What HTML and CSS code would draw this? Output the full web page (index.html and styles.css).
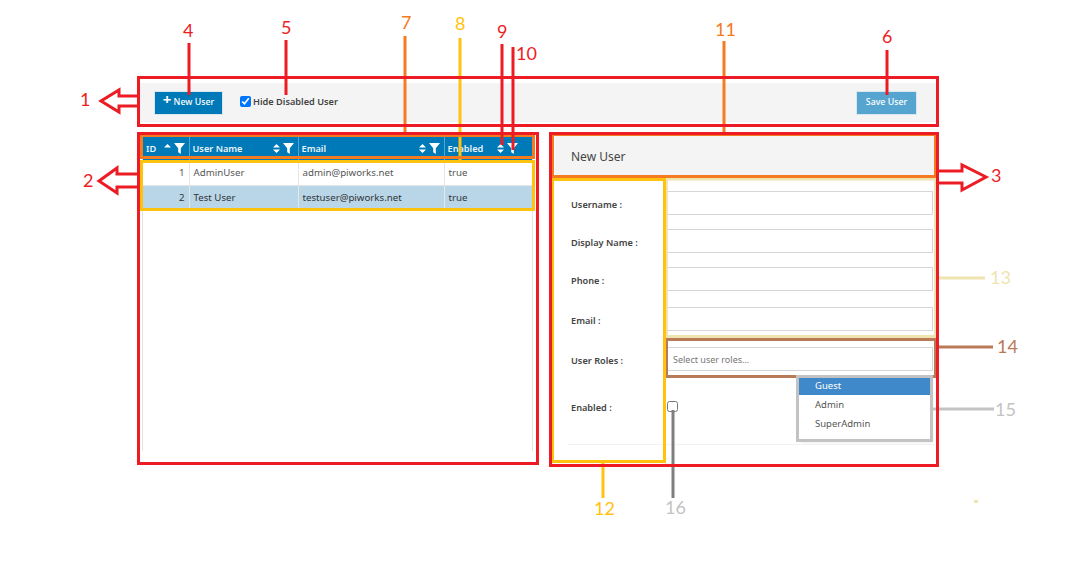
FILE: index.html
```html
<!DOCTYPE html>
<html lang="en">
<head>
    <meta charset="UTF-8">
    <meta name="viewport" content="width=device-width, initial-scale=1.0">
    <title>User Management</title>
    <link rel="stylesheet" href="styles.css">
</head>
<body>
    <svg width="0" height="0" class="defs">
        <symbol id="funnel" viewBox="0 0 11 11"><path d="M0 0h11L6.8 5.2V11L4.2 9.2V5.2z"/></symbol>
        <symbol id="sort" viewBox="0 0 7 9"><path d="M3.5 0L7 3.6H0zM3.5 9L0 5.4h7z"/></symbol>
        <symbol id="sort-up" viewBox="0 0 7 9"><path d="M3.5 0L7 3.6H0z"/></symbol>
    </svg>

    <div class="app">
        <div class="toolbar">
            <button class="btn btn-new"><span class="plus">+</span> New User</button>
            <label class="hide-disabled"><input type="checkbox" checked> Hide Disabled User</label>
            <button class="btn btn-save">Save User</button>
        </div>

        <div class="panels">
            <div class="grid-panel">
                <table class="user-grid">
                    <colgroup>
                        <col class="col-id"><col class="col-name"><col class="col-email"><col class="col-enabled">
                    </colgroup>
                    <thead>
                        <tr>
                            <th><div class="th-inner"><span>ID</span><span class="th-icons"><svg class="ic-sort"><use href="#sort-up"/></svg><svg class="ic-filter"><use href="#funnel"/></svg></span></div></th>
                            <th><div class="th-inner"><span>User Name</span><span class="th-icons"><svg class="ic-sort"><use href="#sort"/></svg><svg class="ic-filter"><use href="#funnel"/></svg></span></div></th>
                            <th><div class="th-inner"><span>Email</span><span class="th-icons"><svg class="ic-sort"><use href="#sort"/></svg><svg class="ic-filter"><use href="#funnel"/></svg></span></div></th>
                            <th class="th-last"><div class="th-inner"><span>Enabled</span><span class="th-icons"><svg class="ic-sort"><use href="#sort"/></svg><svg class="ic-filter"><use href="#funnel"/></svg></span></div></th>
                        </tr>
                    </thead>
                    <tbody>
                        <tr>
                            <td class="num">1</td><td>AdminUser</td><td>admin@piworks.net</td><td>true</td>
                        </tr>
                        <tr class="selected">
                            <td class="num">2</td><td>Test User</td><td>testuser@piworks.net</td><td>true</td>
                        </tr>
                    </tbody>
                </table>
            </div>

            <div class="form-panel">
                <div class="form-title">New User</div>
                <form class="user-form">
                    <label>Username :</label><input type="text">
                    <label>Display Name :</label><input type="text">
                    <label>Phone :</label><input type="text">
                    <label>Email :</label><input type="text">
                    <label>User Roles :</label>
                    <div class="roles-field">
                        <input type="text" placeholder="Select user roles...">
                        <ul class="roles-menu">
                            <li class="active">Guest</li>
                            <li>Admin</li>
                            <li>SuperAdmin</li>
                        </ul>
                    </div>
                    <label class="label-check">Enabled :</label>
                    <div><input type="checkbox" class="enabled-box"></div>
                </form>
            </div>
        </div>
    </div>

    <!-- callouts drawn over the screenshot -->
    <svg class="callouts" width="1067" height="588" viewBox="0 0 1067 588">
        <g fill="none" stroke-width="3">
            <rect x="666.5" y="179" width="269" height="157.5" stroke="#efe4b0"/>
            <path d="M935 278H985" stroke="#efe4b0"/>
            <rect x="666.5" y="339.5" width="269" height="37" stroke="#b97a57"/>
            <path d="M937 347H993" stroke="#b97a57"/>
            <rect x="797.5" y="376.5" width="134" height="64" stroke="#c3c3c3"/>
            <path d="M933 409H994" stroke="#c3c3c3"/>
            <path d="M673 410V498" stroke="#7f7f7f"/>

            <rect x="141.5" y="161.5" width="392" height="48" stroke="#ffc20e"/>
            <rect x="552.5" y="179.5" width="112" height="282" stroke="#ffc20e"/>
            <path d="M460 38V163M603 463V498" stroke="#ffc20e"/>

            <rect x="141.5" y="135.5" width="392" height="22" stroke="#f47b20"/>
            <rect x="552.5" y="134.5" width="383" height="42" stroke="#f47b20"/>
            <path d="M405 36V134M724 41V133" stroke="#f47b20"/>

            <g stroke="#ed1c24">
                <rect x="138.5" y="77.5" width="799" height="48"/>
                <rect x="138.5" y="133.5" width="399" height="330"/>
                <rect x="550.5" y="133.5" width="387" height="332"/>
                <path d="M189 43V95M286 40V95M502 44V145M513 47V150M887 50V95"/>
                <path d="M137 96H119V90L101 101L119 112V106H137"/>
                <path d="M137 174H117V168L99 181L117 193V187H137"/>
                <path d="M939 171H962V165L986 177L962 190V183H939"/>
            </g>
        </g>
        <rect x="974" y="500" width="4" height="3" fill="#efe4b0"/>
        <g class="nums">
            <g fill="#ed1c24">
                <text x="80" y="106">1</text>
                <text x="83" y="187">2</text>
                <text x="991" y="182">3</text>
                <text x="183" y="37">4</text>
                <text x="281" y="34">5</text>
                <text x="882" y="43">6</text>
                <text x="497" y="38">9</text>
                <text x="516" y="60">10</text>
            </g>
            <g fill="#f47b20">
                <text x="401" y="29">7</text>
                <text x="715" y="36">11</text>
            </g>
            <g fill="#ffc20e">
                <text x="455" y="30">8</text>
                <text x="594" y="515">12</text>
            </g>
            <text x="990" y="284" fill="#efe4b0">13</text>
            <text x="997" y="353" fill="#b97a57">14</text>
            <text x="995" y="416" fill="#c3c3c3">15</text>
            <text x="665" y="514" fill="#c3c3c3">16</text>
        </g>
    </svg>
</body>
</html>
```

FILE: styles.css
```css
body {
    margin: 0;
    background: #fff;
    font-family: "Noto Sans", sans-serif;
    font-size: 10px;
    color: #333;
    position: relative;
    height: 588px;
    overflow: hidden;
}

.defs {
    position: absolute;
}

.app {
    width: 798px;
    margin-left: 139px;
    padding-top: 83px;
}

/* top bar */
.toolbar {
    height: 39px;
    background: #f4f4f4;
    display: flex;
    align-items: center;
    padding: 0 20px 0 15px;
}

.btn {
    height: 24px;
    border: 1px solid #dbe7ef;
    color: #fff;
    font-family: inherit;
    font-size: 8.8px;
    font-weight: 500;
    padding: 0 0 2px;
}

.btn-new {
    width: 69px;
    background: #0079b8;
}

.plus {
    font-size: 15px;
    font-weight: 700;
    line-height: 9px;
}

.btn-save {
    width: 61px;
    margin-left: auto;
    background: #55a5d0;
}

.hide-disabled {
    display: flex;
    align-items: center;
    gap: 2px;
    margin: 0 0 3px 17px;
    font-weight: 600;
    font-size: 9.2px;
    color: #444;
}

.hide-disabled input {
    width: 11px;
    height: 11px;
    margin: 0;
}

.panels {
    display: flex;
    margin-top: 13px;
}

/* left grid */
.grid-panel {
    width: 391px;
    height: 315px;
    margin: 1px 0 0 3px;
    border-left: 1px solid #e3e3e3;
    border-right: 1px solid #e3e3e3;
    box-sizing: border-box;
}

.user-grid {
    width: 100%;
    table-layout: fixed;
    border-collapse: collapse;
}

.col-id { width: 46px; }
.col-name { width: 109px; }
.col-email { width: 146px; }

.user-grid th {
    height: 25px;
    padding: 0 4px 0 3px;
    background: #0079b8;
    border-right: 1px solid #5ba3cc;
    color: #e8f3f9;
    font-size: 9.2px;
    font-weight: 600;
    text-align: left;
}

.user-grid .th-last {
    border-right: none;
    padding-right: 14px;
}

.th-inner {
    display: flex;
    align-items: center;
    justify-content: space-between;
}

.th-icons {
    display: flex;
    align-items: center;
    gap: 3px;
    fill: #fff;
}

.ic-sort {
    width: 7px;
    height: 9px;
}

.ic-filter {
    width: 11px;
    height: 11px;
}

.user-grid td {
    height: 24px;
    padding: 0 4px;
    box-sizing: border-box;
    border-right: 1px solid #e6e6e6;
    border-bottom: 1px solid #e6e6e6;
    color: #555;
    font-size: 9.7px;
}

.user-grid td:last-child {
    border-right: none;
}

.user-grid td.num {
    text-align: right;
}

.user-grid .selected td {
    background: #b8d6e8;
    color: #333;
}

/* right form */
.form-panel {
    width: 380px;
    margin-left: 22px;
}

.form-title {
    height: 41px;
    line-height: 44px;
    padding-left: 16px;
    background: #f4f4f4;
    font-size: 12px;
    color: #444;
}

.user-form {
    display: grid;
    grid-template-columns: 99px 266px;
    grid-template-rows: 38px 38px 40px 40px 54px 43px;
    margin-left: 13px;
    padding-top: 15px;
    border-bottom: 1px solid #f2f2f2;
}

.user-form label {
    padding: 7px 0 0 3px;
    font-weight: 600;
    font-size: 9.2px;
    color: #444;
}

.user-form .label-check {
    padding-top: 0;
}

.user-form input[type="text"] {
    display: block;
    width: 100%;
    height: 24px;
    margin: 0;
    padding: 0 5px;
    box-sizing: border-box;
    border: 1px solid #d6d6d6;
    font-family: inherit;
    font-size: 9px;
}

.user-form input::placeholder {
    color: #777;
}

.enabled-box {
    display: block;
    width: 11px;
    height: 11px;
    margin: 0;
}

.roles-field {
    position: relative;
}

.roles-menu {
    position: absolute;
    top: 31px;
    left: 132px;
    width: 131px;
    height: 62px;
    margin: 0;
    padding: 0;
    list-style: none;
    background: #fff;
    box-shadow: 2px 2px 3px rgba(0, 0, 0, 0.12);
    font-size: 9.5px;
    color: #555;
}

.roles-menu li {
    height: 19px;
    line-height: 19px;
    padding-left: 16px;
}

.roles-menu .active {
    height: 17px;
    line-height: 16px;
    background: #3f88c9;
    color: #fff;
}

/* callout layer */
.callouts {
    position: absolute;
    top: 0;
    left: 0;
    pointer-events: none;
}

.nums text {
    font-family: Lato, sans-serif;
    font-size: 18px;
}
```
